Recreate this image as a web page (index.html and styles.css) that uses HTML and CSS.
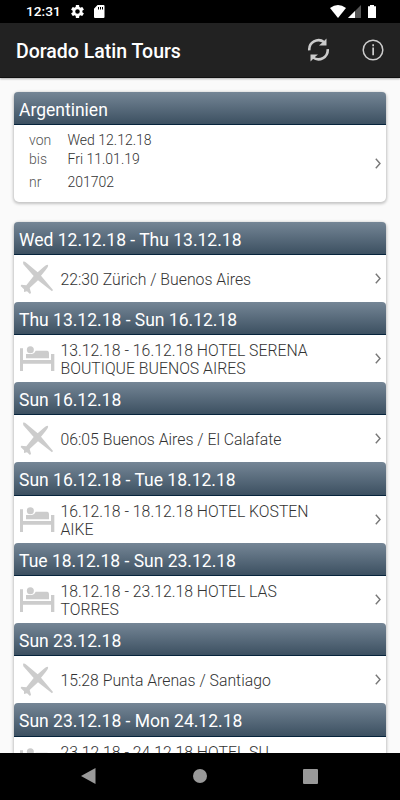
FILE: index.html
```
<!DOCTYPE html>
<html lang="en">
<head>
    <meta charset="UTF-8">
    <meta name="viewport" content="width=device-width, initial-scale=1.0">
    <title>Dorado Latin Tours</title>
    <link rel="stylesheet" href="styles.css">
</head>
<body>
    <svg class="symbols" width="0" height="0">
        <symbol id="plane" viewBox="30 18 102 102">
            <path d="M39 20Q43 18 49 23L83 52 101 36Q111 28 114 30 116 34 107 45L93 62 129 105 126 109 84 76 59 99 63 113 60 117 51 109 42 111V103L32 93 34 89 49 91 71 63 40 28Z"/>
        </symbol>
        <symbol id="bed" viewBox="30 33 105 75">
            <path d="M30 40H39V75H123V57H133V108H123V86H39V108H30ZM48 57H66Q74 55 77 47H112Q117 48 117 54V70H48Z"/>
            <circle cx="61" cy="44" r="10.5"/>
        </symbol>
        <symbol id="chevron" viewBox="0 0 6 11">
            <path d="M.8.8 5 5.5.8 10.2" fill="none" stroke="#777" stroke-width="1.4"/>
        </symbol>
    </svg>

    <div class="status">
        <span class="clock">12:31</span>
        <svg class="gear" width="13" height="13" viewBox="2 2 20 20">
            <path fill-rule="evenodd" d="M19.4 13a7.5 7.5 0 0 0 0-2l2.1-1.6c.2-.2.3-.4.1-.7l-2-3.4c-.1-.2-.4-.3-.6-.2l-2.5 1a7.3 7.3 0 0 0-1.7-1L14.5 2.4c0-.2-.2-.4-.5-.4h-4c-.3 0-.5.2-.5.4L9.2 5.1c-.6.2-1.2.6-1.7 1L5 5.1c-.2-.1-.5 0-.6.2l-2 3.4c-.1.3-.1.5.1.7L4.6 11a7.5 7.5 0 0 0 0 2l-2.1 1.6c-.2.2-.2.4-.1.7l2 3.4c.1.2.4.3.6.2l2.5-1c.5.4 1.1.8 1.7 1l.3 2.7c0 .2.2.4.5.4h4c.3 0 .5-.2.5-.4l.3-2.7c.6-.2 1.2-.6 1.7-1l2.5 1c.2.1.5 0 .6-.2l2-3.4c.2-.3.1-.5-.1-.7ZM12 15.5a3.5 3.5 0 1 1 0-7 3.5 3.5 0 0 1 0 7Z"/>
        </svg>
        <svg class="sdcard" width="11" height="13" viewBox="0 0 11 13">
            <path fill-rule="evenodd" d="M3.5 0H9.5Q10.5 0 10.5 1V12Q10.5 13 9.5 13H1Q0 13 0 12V3.7ZM4 2V4.5H5V2ZM6 2V4.5H7V2ZM8 2V4.5H9V2Z"/>
        </svg>
        <svg class="wifi" width="16" height="13" viewBox="0 0 16 13">
            <path d="M0 3Q8-3 16 3L8 13Z"/>
        </svg>
        <svg class="signal" width="13" height="13" viewBox="0 0 13 13">
            <path d="M0 13 13 0V13Z" fill="#555"/>
            <path d="M0 13 7 6V13Z"/>
        </svg>
        <svg class="battery" width="8" height="13" viewBox="0 0 8 13">
            <path d="M2 0H6V1.3H8V13H0V1.3H2Z"/>
        </svg>
    </div>

    <div class="appbar">
        <h1>Dorado Latin Tours</h1>
        <svg class="refresh" width="24" height="24" viewBox="0 0 24 24">
            <path d="M2.3 12.3A9.3 9.3 0 0 1 17 4M20.7 11.2A9.3 9.3 0 0 1 6 19.5" fill="none" stroke="#ccc" stroke-width="2.6"/>
            <path d="M19.5.5V7.5H12L14.5 5.3 17 3ZM3.5 23.5V16.5H11L8.5 18.5 6 21Z" fill="#ccc"/>
        </svg>
        <svg class="info" width="22" height="22" viewBox="0 0 22 22">
            <circle cx="11" cy="11" r="9.8" fill="none" stroke="#ccc" stroke-width="1.5"/>
            <path d="M10.3 5.3H12V7.3H10.3ZM10.3 8.5H12V16.3H10.3Z" fill="#ccc"/>
        </svg>
    </div>

    <div class="content">
        <div class="card trip">
            <h2>Argentinien</h2>
            <div class="row">
                <dl>
                    <dt>von</dt><dd>Wed 12.12.18</dd>
                    <dt>bis</dt><dd>Fri 11.01.19</dd>
                    <dt class="nr">nr</dt><dd class="nr">201702</dd>
                </dl>
                <svg class="chevron"><use href="#chevron"/></svg>
            </div>
        </div>

        <div class="card">
            <h2>Wed 12.12.18 - Thu 13.12.18</h2>
            <div class="row">
                <svg class="plane"><use href="#plane"/></svg>
                <p>22:30 Zürich / Buenos Aires</p>
                <svg class="chevron"><use href="#chevron"/></svg>
            </div>
            <h2>Thu 13.12.18 - Sun 16.12.18</h2>
            <div class="row">
                <svg class="bed"><use href="#bed"/></svg>
                <p>13.12.18 - 16.12.18 HOTEL SERENA<br>BOUTIQUE BUENOS AIRES</p>
                <svg class="chevron"><use href="#chevron"/></svg>
            </div>
            <h2>Sun 16.12.18</h2>
            <div class="row">
                <svg class="plane"><use href="#plane"/></svg>
                <p>06:05 Buenos Aires / El Calafate</p>
                <svg class="chevron"><use href="#chevron"/></svg>
            </div>
            <h2>Sun 16.12.18 - Tue 18.12.18</h2>
            <div class="row">
                <svg class="bed"><use href="#bed"/></svg>
                <p>16.12.18 - 18.12.18 HOTEL KOSTEN<br>AIKE</p>
                <svg class="chevron"><use href="#chevron"/></svg>
            </div>
            <h2>Tue 18.12.18 - Sun 23.12.18</h2>
            <div class="row">
                <svg class="bed"><use href="#bed"/></svg>
                <p>18.12.18 - 23.12.18 HOTEL LAS<br>TORRES</p>
                <svg class="chevron"><use href="#chevron"/></svg>
            </div>
            <h2>Sun 23.12.18</h2>
            <div class="row">
                <svg class="plane"><use href="#plane"/></svg>
                <p>15:28 Punta Arenas / Santiago</p>
                <svg class="chevron"><use href="#chevron"/></svg>
            </div>
            <h2>Sun 23.12.18 - Mon 24.12.18</h2>
            <div class="row">
                <svg class="bed"><use href="#bed"/></svg>
                <p>23.12.18 - 24.12.18 HOTEL SU<br>&nbsp;</p>
                <svg class="chevron"><use href="#chevron"/></svg>
            </div>
        </div>
    </div>

    <div class="navbar">
        <svg width="15" height="16" viewBox="0 0 15 16"><path d="M0 8 14.5 0V16Z"/></svg>
        <svg width="14" height="14" viewBox="0 0 14 14"><circle cx="7" cy="7" r="7"/></svg>
        <svg width="15" height="15" viewBox="0 0 15 15"><rect width="15" height="15" rx="1"/></svg>
    </div>
</body>
</html>
```
FILE: styles.css
```
* {
    box-sizing: border-box;
}
body {
    font-family: Roboto, sans-serif;
    display: flex;
    flex-direction: column;
    width: 400px;
    height: 800px;
    margin: 0;
    overflow: hidden;
    background-color: #fafafa;
    color: #333;
}
h1, h2, p, dl, dd {
    margin: 0;
}
svg {
    display: block;
    flex: none;
}
.symbols {
    position: absolute;
}
.status {
    display: flex;
    align-items: center;
    flex: none;
    height: 23px;
    padding-left: 26px;
    background-color: #000;
    color: #fff;
    fill: #fff;
}
.clock {
    width: 45px;
    font-size: 13.7px;
    font-weight: 500;
    line-height: 23px;
}
.sdcard {
    margin-left: 10px;
}
.wifi {
    margin-left: 225px;
}
.signal {
    margin-left: 2px;
}
.battery {
    margin-left: 7px;
}
.appbar {
    display: flex;
    align-items: center;
    flex: none;
    height: 55px;
    padding: 0 16px 0 16px;
    background-color: #222;
    border-bottom: 1px solid #111;
    box-shadow: 0 1px 2px rgba(0, 0, 0, 0.3);
    color: #fff;
    z-index: 1;
}
h1 {
    flex: 1;
    font-size: 19.5px;
    font-weight: 500;
    padding-top: 2px;
}
.refresh {
    margin-right: 31px;
}
.content {
    flex: 1;
    min-height: 0;
    overflow: hidden;
    padding: 13.5px 14px 0;
}
.card {
    background-color: #fff;
    border-radius: 5px;
    box-shadow: 0 1px 3px 1px rgba(0, 0, 0, 0.22);
}
.trip {
    height: 110.5px;
    margin-bottom: 19.5px;
}
h2 {
    height: 33.3px;
    padding-left: 5px;
    font-size: 17.5px;
    font-weight: 400;
    line-height: 36px;
    color: #fff;
    background: linear-gradient(#758696, #3c5061);
    border-bottom: 1px solid #06233b;
    border-radius: 4px 4px 0 0;
}
.row {
    display: flex;
    align-items: center;
    height: 47px;
    padding: 0 5px 0 6px;
}
.row p {
    flex: 1;
    font-size: 15.8px;
    font-weight: 300;
    line-height: 18px;
    padding-top: 3px;
    white-space: nowrap;
}
.plane, .bed {
    margin-right: 6.5px;
    fill: #ccc;
}
.plane {
    width: 34px;
    height: 34px;
}
.bed {
    width: 35px;
    height: 25px;
    margin-right: 5.5px;
}
.chevron {
    width: 6px;
    height: 11px;
}
.trip .row {
    height: 77px;
    justify-content: space-between;
    padding-left: 15px;
}
dl {
    display: grid;
    grid-template-columns: 38.5px auto;
    font-size: 14px;
    font-weight: 300;
    line-height: 18.5px;
    padding-bottom: 4px;
}
dt {
    color: #555;
}
.nr {
    margin-top: 5px;
}
.navbar {
    display: flex;
    align-items: center;
    justify-content: space-between;
    flex: none;
    height: 47px;
    padding: 0 82px 1px 81px;
    background-color: #000;
    fill: #999;
}
```
